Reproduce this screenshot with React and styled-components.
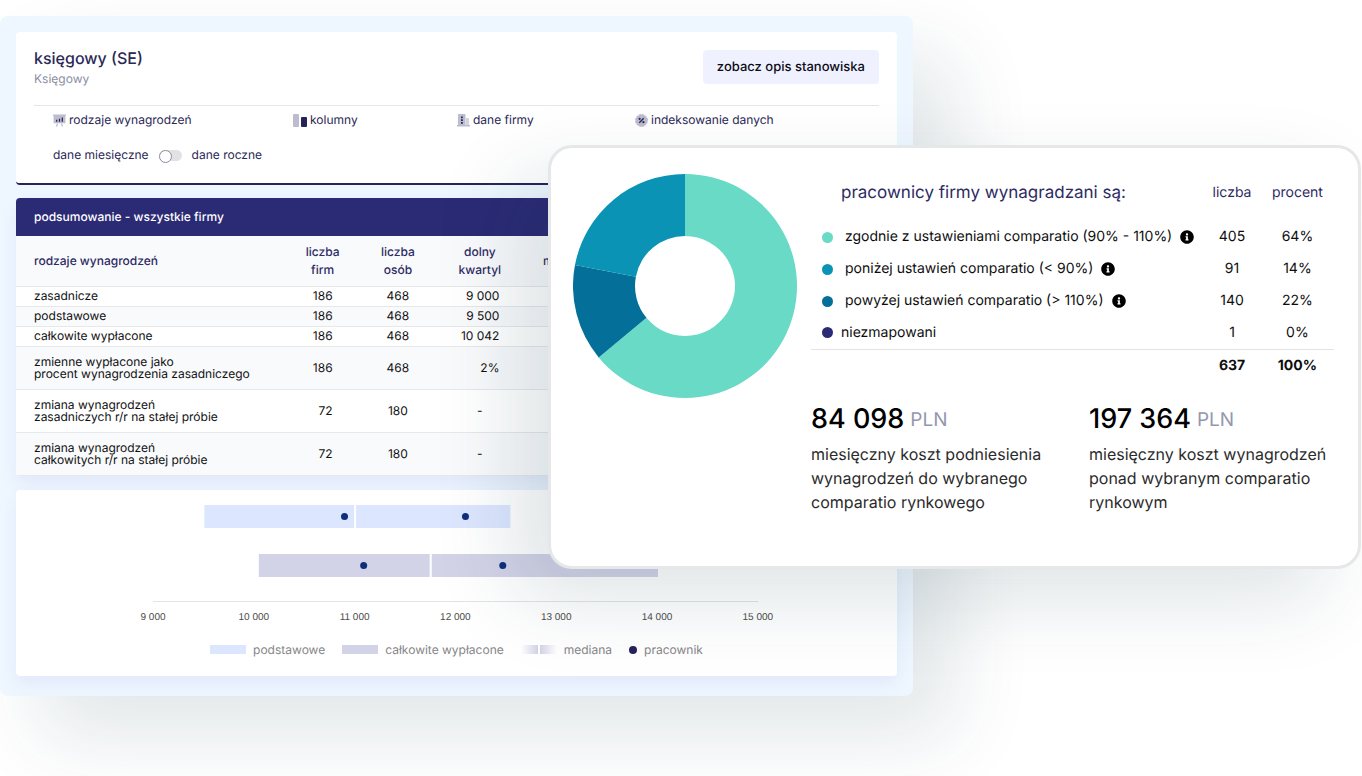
import React from 'react';
import styled, { createGlobalStyle } from 'styled-components';
import { FaInfoCircle } from 'react-icons/fa';

const GlobalStyle = createGlobalStyle`
  * {
    box-sizing: border-box;
  }
  body {
    margin: 0;
    background: #fff;
    color: #111;
    font-family: Inter, "Liberation Sans", sans-serif;
    text-rendering: geometricPrecision;
    overflow-x: hidden;
  }
  h1, h2, p {
    margin: 0;
    font-weight: 400;
  }
  button {
    text-rendering: inherit;
  }
`;

const Stage = styled.main`
  display: grid;
  grid-template-columns: 548fr 365fr 448fr;
  align-items: start;
  padding: 16px 1px 80px 0;
`;

const Board = styled.section`
  grid-area: 1 / 1 / 2 / 3;
  display: flex;
  flex-direction: column;
  padding: 16px 16px 20px;
  border-radius: 8px;
  background: #eef7ff;
  box-shadow: 40px 40px 80px rgba(16, 56, 72, 0.12);
`;

const Card = styled.div`
  border-radius: 4px;
  background: #fff;
  overflow: hidden;
  box-shadow: 0 8px 16px rgba(90, 80, 190, 0.08);
`;

const HeaderCard = styled(Card)`
  padding: 18px 18px 19px;
  border-bottom: 2px solid #262558;
  box-shadow: none;
  color: #2a2856;
`;

const Heading = styled.div`
  display: flex;
  justify-content: space-between;
  align-items: flex-start;
  padding-bottom: 19px;
  border-bottom: 1px solid #e6e6e8;
`;

const Title = styled.h1`
  font-size: 16px;
  line-height: 16px;
  font-weight: 500;
`;

const Subtitle = styled.p`
  margin-top: 6px;
  font-size: 12px;
  line-height: 14px;
  color: #8b8fa5;
`;

const DescriptionButton = styled.button`
  height: 34px;
  padding: 0 14px;
  border: 0;
  border-radius: 4px;
  background: #f0f1ff;
  color: #0c0c14;
  font: 500 13px Inter, sans-serif;
`;

const Filters = styled.nav`
  display: grid;
  grid-template-columns: 240fr 164fr 178fr 244fr;
  padding: 5px 0 0 19px;
`;

const FilterButton = styled.button`
  display: flex;
  align-items: center;
  gap: 3px;
  padding: 0;
  border: 0;
  background: none;
  color: inherit;
  font: 400 12px/18px Inter, sans-serif;
`;

const Period = styled.div`
  display: flex;
  align-items: center;
  gap: 10px;
  padding: 17px 0 0 19px;
  font-size: 12px;
  line-height: 18px;
`;

const Switch = styled.input`
  appearance: none;
  display: flex;
  width: 23px;
  height: 11px;
  margin: 0;
  border-radius: 6px;
  background: #e2e2e4;

  &::before {
    content: '';
    width: 11px;
    height: 11px;
    border: 1px solid #8d8da0;
    border-radius: 50%;
    background: #fff;
  }
  &:checked {
    justify-content: flex-end;
  }
`;

const SummaryCard = styled(Card)`
  margin-top: 13px;
`;

const SummaryTitle = styled.h2`
  padding: 10px 18px;
  background: #2b2a75;
  color: #fff;
  font-size: 12px;
  line-height: 18px;
  font-weight: 500;
`;

const SummaryTable = styled.table`
  width: 100%;
  table-layout: fixed;
  border-collapse: collapse;
  font-size: 12px;
  line-height: 12px;

  th {
    padding: 0;
    font-weight: 400;
  }
  thead th {
    height: 50px;
    font-weight: 500;
    line-height: 18px;
    color: #2d2b63;
  }
  th:first-child {
    padding-left: 18px;
    text-align: left;
  }
  tr {
    border-bottom: 1px solid #e6e8ea;
  }
  thead tr,
  tbody tr:nth-child(even) {
    background: #f9fafc;
  }
`;

const Col = styled.col`
  width: ${({ $share }) => $share};
`;

const SummaryRow = styled.tr`
  height: ${({ $tall }) => ($tall ? '43px' : '20px')};
`;

const NumberCell = styled.td`
  padding: 0 ${({ $inset }) => $inset || 0}px 0 0;
  text-align: ${({ $inset }) => ($inset ? 'right' : 'center')};
`;

const ChartCard = styled(Card)`
  margin-top: 14px;
  padding-bottom: 18px;
`;

const ChartSvg = styled.svg`
  display: block;
  width: 100%;

  text {
    font: 10px "Liberation Sans", Arial, sans-serif;
    fill: #4c4c4c;
    text-anchor: middle;
  }
`;

const Legend = styled.ul`
  display: flex;
  justify-content: center;
  gap: 17px;
  margin: 0;
  padding: 10px 0 0;
  list-style: none;
  font-size: 12px;
  line-height: 16px;
  color: #868688;
`;

const LegendItem = styled.li`
  display: flex;
  align-items: center;
  gap: 7px;
`;

const Swatch = styled.span`
  width: 36px;
  height: 9px;
  background: ${({ $fill }) => $fill};
`;

const WorkerDot = styled.span`
  width: 8px;
  height: 8px;
  border-radius: 50%;
  background: #25235a;
`;

const Panel = styled.section`
  grid-area: 1 / 2 / 2 / 4;
  display: grid;
  grid-template-columns: 224fr 523fr;
  column-gap: 14px;
  align-items: start;
  margin-top: 129px;
  padding: 26px 24px 52px 22px;
  border: 3px solid #e6e7e9;
  border-radius: 24px;
  background: #fff;
  box-shadow: -36px 32px 80px rgba(16, 56, 72, 0.13);
`;

const Donut = styled.svg`
  display: block;
  width: 100%;
`;

const StaffTable = styled.table`
  width: 100%;
  table-layout: fixed;
  border-collapse: collapse;
  font-size: 14px;
  line-height: 18px;
  color: #0d0d0d;

  th,
  td {
    padding: 0;
    font-weight: 400;
    text-align: center;
  }
  thead th {
    height: 47px;
    padding-bottom: 9px;
    color: #2d2b63;
  }
  tbody tr {
    height: 32px;
  }
  tbody th {
    text-align: left;
  }
  tfoot td {
    height: 33px;
    border-top: 1px solid #e3e3e5;
    font-weight: 700;
  }
`;

const StaffTitle = styled.th`
  && {
    padding-left: 30px;
    font-size: 17px;
    text-align: left;
  }
`;

const GroupLabel = styled.div`
  display: flex;
  align-items: center;
  padding-left: 11px;
  white-space: nowrap;
`;

const GroupDot = styled.span`
  width: 11px;
  height: 11px;
  margin-right: ${({ $gap }) => $gap}px;
  border-radius: 50%;
  background: ${({ $color }) => $color};
`;

const InfoIcon = styled(FaInfoCircle)`
  margin-left: 8px;
  color: #000;
`;

const Costs = styled.div`
  display: grid;
  grid-template-columns: 278fr 245fr;
  margin-top: 19px;
`;

const Amount = styled.p`
  font-size: 27px;
  line-height: 36px;
  font-weight: 500;
  color: #000;
`;

const Currency = styled.span`
  margin-left: 6px;
  font-size: 19px;
  line-height: 24px;
  font-weight: 400;
  vertical-align: 2px;
  color: #9497ae;
`;

const CostText = styled.p`
  max-width: 240px;
  margin-top: 5px;
  font-size: 16px;
  line-height: 24px;
  color: #2b2b2b;
`;

const BoardIcon = () => (
  <svg width="13" height="13" viewBox="0 0 13 13">
    <path d="M0 .5h13v1.2h-.6v7.6H.6V1.700H0z" fill="#bdbccf" />
    <path d="M4.600 9.500 3.400 12.500M8.400 9.500l1.200 3" stroke="#bdbccf" strokeWidth="1.200" />
    <path d="M3.700 5.800v2M6.500 4.700v3.100M9.300 3.400v4.400" stroke="#2a2856" strokeWidth="1.300" />
  </svg>
);

const ColumnsIcon = () => (
  <svg width="14" height="13" viewBox="0 0 14 13">
    <rect width="6" height="13" rx="1" fill="#bdbccf" />
    <rect x="8" y="3" width="6" height="10" rx="1" fill="#25235a" />
  </svg>
);

const CompanyIcon = () => (
  <svg width="13" height="13" viewBox="0 0 13 13">
    <path d="M1 1.200C1 .5 1.500 0 2.200 0h5C8 0 8.500.5 8.500 1.200V11H1z" fill="#bdbccf" />
    <path d="M9 4h2c.6 0 1 .4 1 1v6H9z" fill="#d3d3e0" />
    <path d="M0 11h13v1.500H0z" fill="#bdbccf" />
    <path d="M4 2.500h1.800v1.700H4zM4 5.300h1.800V7H4zM4 8.100h1.800v1.700H4z" fill="#2a2856" />
  </svg>
);

const IndexIcon = () => (
  <svg width="13" height="13" viewBox="0 0 13 13">
    <circle cx="6.500" cy="6.500" r="5.900" fill="#bdbccf" />
    <circle cx="6.500" cy="6.500" r="6" fill="none" stroke="#bdbccf" strokeWidth="1" strokeDasharray="2.200 .9" />
    <path d="m4.300 8.700 4.400-4.400" stroke="#2a2856" strokeWidth="1.400" />
    <circle cx="4.600" cy="4.800" r="1.100" fill="#2a2856" />
    <circle cx="8.400" cy="8.200" r="1.100" fill="#2a2856" />
  </svg>
);

const filters = [
  { label: 'rodzaje wynagrodzeń', Icon: BoardIcon },
  { label: 'kolumny', Icon: ColumnsIcon },
  { label: 'dane firmy', Icon: CompanyIcon },
  { label: 'indeksowanie danych', Icon: IndexIcon },
];

const summary = [
  { name: ['zasadnicze'], firms: 186, people: 468, lower: '9 000', median: '10 500' },
  { name: ['podstawowe'], firms: 186, people: 468, lower: '9 500' },
  { name: ['całkowite wypłacone'], firms: 186, people: 468, lower: '10 042' },
  { name: ['zmienne wypłacone jako', 'procent wynagrodzenia zasadniczego'], firms: 186, people: 468, lower: '2%' },
  { name: ['zmiana wynagrodzeń', 'zasadniczych r/r na stałej próbie'], firms: 72, people: 180, lower: '-' },
  { name: ['zmiana wynagrodzeń', 'całkowitych r/r na stałej próbie'], firms: 72, people: 180, lower: '-' },
];

const ticks = ['9 000', '10 000', '11 000', '12 000', '13 000', '14 000', '15 000'];

const ranges = [
  { y: 15, from: 9510, median: 11005, to: 12545, staff: [10900, 12100], color: '#dde6ff' },
  { y: 64, from: 10050, median: 11755, to: 14010, staff: [11090, 12470], color: '#d3d3e7' },
];

const groups = [
  { label: 'zgodnie z ustawieniami comparatio (90% - 110%)', count: 405, percent: 64, color: '#68dac5', info: true },
  { label: 'poniżej ustawień comparatio (< 90%)', count: 91, percent: 14, color: '#0a93b5', info: true },
  { label: 'powyżej ustawień comparatio (> 110%)', count: 140, percent: 22, color: '#046f98', info: true },
  { label: 'niezmapowani', count: 1, percent: 0, color: '#2b2a75' },
];

const slices = [
  { from: 0, to: 64, color: '#68dac5' },
  { from: 64, to: 78, color: '#046f98' },
  { from: 78, to: 100, color: '#0a93b5' },
];

const salaryX = value => 137 + ((value - 9000) / 1000) * 100.8;

const slicePath = ({ from, to }) => {
  const point = (share, r) => {
    const angle = (share / 100) * 2 * Math.PI;
    return `${112 + r * Math.sin(angle)} ${112 - r * Math.cos(angle)}`;
  };
  const large = to - from > 50 ? 1 : 0;
  return `M${point(from, 112)}A112 112 0 ${large} 1 ${point(to, 112)}L${point(to, 50)}A50 50 0 ${large} 0 ${point(from, 50)}Z`;
};

const SalaryChart = () => (
  <ChartSvg viewBox="0 0 881 142" role="img" aria-label="rozkład wynagrodzeń">
    {ranges.map(({ y, from, median, to, staff, color }) => (
      <g key={y}>
        <rect x={salaryX(from)} y={y} width={salaryX(to) - salaryX(from)} height="23" fill={color} />
        <rect x={salaryX(median) - 1} y={y} width="2" height="23" fill="#fff" />
        {staff.map(value => (
          <circle key={value} cx={salaryX(value)} cy={y + 11.5} r="3.500" fill="#0f2f7d" />
        ))}
      </g>
    ))}
    <path d="M137 111.500h605" stroke="#e2e4e6" />
    {ticks.map((tick, i) => (
      <text key={tick} x={salaryX(9000 + i * 1000)} y="130">
        {tick}
      </text>
    ))}
  </ChartSvg>
);

const SummarySection = () => (
  <SummaryCard>
    <SummaryTitle>podsumowanie - wszystkie firmy</SummaryTitle>
    <SummaryTable>
      <colgroup>
        <Col $share="30.600%" />
        <Col $share="8.400%" />
        <Col $share="8.700%" />
        <Col $share="9.900%" />
        <Col $share="10%" />
        <Col />
      </colgroup>
      <thead>
        <tr>
          <th scope="col">rodzaje wynagrodzeń</th>
          <th scope="col">liczba<br />firm</th>
          <th scope="col">liczba<br />osób</th>
          <th scope="col">dolny<br />kwartyl</th>
          <th scope="col">mediana</th>
          <td />
        </tr>
      </thead>
      <tbody>
        {summary.map(({ name, firms, people, lower, median }) => (
          <SummaryRow key={name.join(' ')} $tall={name.length > 1}>
            <th scope="row">
              {name[0]}
              {name[1] && <br />}
              {name[1]}
            </th>
            <NumberCell $inset={27}>{firms}</NumberCell>
            <NumberCell>{people}</NumberCell>
            <NumberCell $inset={lower === '-' ? 0 : 24}>{lower}</NumberCell>
            <NumberCell>{median}</NumberCell>
            <td />
          </SummaryRow>
        ))}
      </tbody>
    </SummaryTable>
  </SummaryCard>
);

const StaffPanel = () => (
  <Panel>
    <Donut viewBox="0 0 224 224" role="img" aria-label="pracownicy firmy">
      {slices.map(slice => (
        <path key={slice.from} d={slicePath(slice)} fill={slice.color} />
      ))}
    </Donut>
    <div>
      <StaffTable>
        <colgroup>
          <Col />
          <Col $share="11%" />
          <Col $share="14%" />
        </colgroup>
        <thead>
          <tr>
            <StaffTitle scope="col">pracownicy firmy wynagradzani są:</StaffTitle>
            <th scope="col">liczba</th>
            <th scope="col">procent</th>
          </tr>
        </thead>
        <tbody>
          {groups.map(({ label, count, percent, color, info }) => (
            <tr key={label}>
              <th scope="row">
                <GroupLabel>
                  <GroupDot $color={color} $gap={info ? 12 : 8} />
                  {label}
                  {info && <InfoIcon size={14} />}
                </GroupLabel>
              </th>
              <td>{count}</td>
              <td>{percent}%</td>
            </tr>
          ))}
        </tbody>
        <tfoot>
          <tr>
            <td />
            <td>637</td>
            <td>100%</td>
          </tr>
        </tfoot>
      </StaffTable>
      <Costs>
        <div>
          <Amount>84 098<Currency>PLN</Currency></Amount>
          <CostText>miesięczny koszt podniesienia wynagrodzeń do wybranego comparatio rynkowego</CostText>
        </div>
        <div>
          <Amount>197 364<Currency>PLN</Currency></Amount>
          <CostText>miesięczny koszt wynagrodzeń ponad wybranym comparatio rynkowym</CostText>
        </div>
      </Costs>
    </div>
  </Panel>
);

const App = () => (
  <>
    <GlobalStyle />
    <Stage>
      <Board>
        <HeaderCard>
          <Heading>
            <div>
              <Title>księgowy (SE)</Title>
              <Subtitle>Księgowy</Subtitle>
            </div>
            <DescriptionButton type="button">zobacz opis stanowiska</DescriptionButton>
          </Heading>
          <Filters>
            {filters.map(({ label, Icon }) => (
              <FilterButton key={label} type="button">
                <Icon />
                {label}
              </FilterButton>
            ))}
          </Filters>
          <Period>
            <label htmlFor="period">dane miesięczne</label>
            <Switch id="period" type="checkbox" role="switch" />
            <label htmlFor="period">dane roczne</label>
          </Period>
        </HeaderCard>
        <SummarySection />
        <ChartCard>
          <SalaryChart />
          <Legend>
            <LegendItem><Swatch $fill="#dde6ff" />podstawowe</LegendItem>
            <LegendItem><Swatch $fill="#d3d3e7" />całkowite wypłacone</LegendItem>
            <LegendItem>
              <Swatch $fill="linear-gradient(90deg, #fff, #d3d3e7 47%, #fff 47%, #fff 53%, #d3d3e7 53%, #fff)" />
              mediana
            </LegendItem>
            <LegendItem><WorkerDot />pracownik</LegendItem>
          </Legend>
        </ChartCard>
      </Board>
      <StaffPanel />
    </Stage>
  </>
);

export default App;
